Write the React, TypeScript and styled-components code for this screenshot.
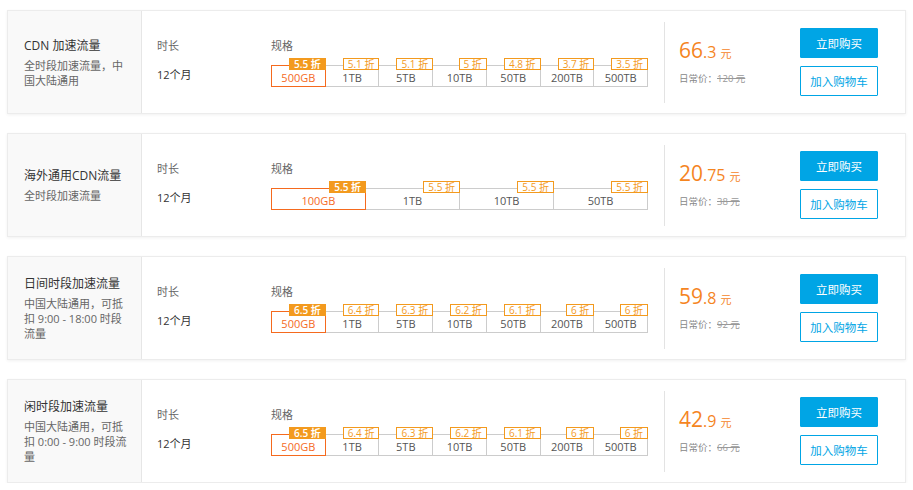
import React from "react";
import styled, { createGlobalStyle } from "styled-components";

const GlobalStyle = createGlobalStyle`
  body {
    margin: 0;
    background: #fff;
    font-family: "Open Sans", "Noto Sans CJK SC", sans-serif;
    color: #333;
  }
`;

const Page = styled.div`
  padding: 10px 7px 0 7px;
  width: 899px;
  display: flex;
  flex-direction: column;
  gap: 19px;
`;

const Card = styled.div`
  height: 104px;
  box-sizing: border-box;
  border: 1px solid #ececec;
  box-shadow: 0 1px 3px rgba(0, 0, 0, 0.06);
  display: flex;
  align-items: stretch;
  background: #fff;
`;

const Intro = styled.div`
  width: 134px;
  box-sizing: border-box;
  padding: 0 10px 0 16px;
  background: #f9f9f9;
  border-right: 1px solid #e6e6e6;
  display: flex;
  flex-direction: column;
  justify-content: center;
`;

const Title = styled.div`
  font-size: 12px;
  color: #333;
  line-height: 18px;
  margin-bottom: 3px;
  white-space: nowrap;
`;

const Desc = styled.div`
  font-size: 11px;
  color: #666;
  line-height: 15px;
  width: 103px;
`;

const Duration = styled.div`
  width: 114px;
  padding-left: 15px;
  padding-top: 26px;
  font-size: 11px;
`;

const Label = styled.div`
  color: #666;
  line-height: 18px;
  height: 18px;
`;

const Value = styled.div`
  margin-top: 11px;
  color: #333;
  line-height: 18px;
`;

const Spec = styled.div`
  width: 377px;
  padding-top: 26px;
  font-size: 11px;
`;

const Options = styled.div`
  margin-top: 10px;
  display: flex;
  height: 22px;
`;

const Option = styled.div<{ $active?: boolean }>`
  flex: 1;
  position: relative;
  box-sizing: border-box;
  border: 1px solid ${(p) => (p.$active ? "#f56a1e" : "#cccccc")};
  border-left-width: ${(p) => (p.$active ? "1px" : "0")};
  color: ${(p) => (p.$active ? "#f56a1e" : "#555")};
  display: flex;
  align-items: center;
  justify-content: center;
  &:first-child {
    border-left-width: 1px;
  }
`;

const Size = styled.span`
  font-size: 11px;
  line-height: 11px;
  margin-top: 3px;
`;

const Badge = styled.span<{ $active?: boolean }>`
  position: absolute;
  right: -1px;
  top: -8px;
  height: 12px;
  box-sizing: border-box;
  padding: 0 4px;
  font-size: 10px;
  line-height: 10px;
  border: 1px solid #f39a1e;
  background: ${(p) => (p.$active ? "#f39a1e" : "#fff")};
  color: ${(p) => (p.$active ? "#fff" : "#f39a1e")};
  font-weight: ${(p) => (p.$active ? 600 : 400)};
  white-space: nowrap;
`;

const PriceBox = styled.div`
  margin: 11px 0 10px 16px;
  border-left: 1px solid #e3e3e3;
  width: 121px;
  padding-left: 14px;
  display: flex;
  flex-direction: column;
  justify-content: center;
  padding-bottom: 4px;
`;

const Price = styled.div`
  color: #f5851f;
  line-height: 28px;
  white-space: nowrap;
`;

const Int = styled.span`
  font-size: 21px;
  font-weight: 500;
`;

const Dec = styled.span`
  font-size: 16px;
`;

const Unit = styled.span`
  font-size: 11px;
  margin-left: 4px;
`;

const Original = styled.div`
  margin-top: 4px;
  font-size: 9.5px;
  color: #888;
  line-height: 14px;
  s {
    color: #999;
  }
`;

const Actions = styled.div`
  display: flex;
  flex-direction: column;
  justify-content: center;
  gap: 8px;
`;

const Button = styled.button<{ $primary?: boolean }>`
  width: 78px;
  height: 30px;
  box-sizing: border-box;
  border: 1px solid #00a5e5;
  border-radius: 1px;
  background: ${(p) => (p.$primary ? "#00a5e5" : "#fff")};
  color: ${(p) => (p.$primary ? "#fff" : "#00a5e5")};
  font-family: inherit;
  font-size: 11.5px;
  padding: 0;
  cursor: pointer;
`;

type Item = { size: string; off: string };

type Product = {
  title: string;
  desc: string;
  items: Item[];
  int: string;
  dec: string;
  original: string;
};

const products: Product[] = [
  {
    title: "CDN 加速流量",
    desc: "全时段加速流量，中国大陆通用",
    items: [
      { size: "500GB", off: "5.5 折" },
      { size: "1TB", off: "5.1 折" },
      { size: "5TB", off: "5.1 折" },
      { size: "10TB", off: "5 折" },
      { size: "50TB", off: "4.8 折" },
      { size: "200TB", off: "3.7 折" },
      { size: "500TB", off: "3.5 折" },
    ],
    int: "66",
    dec: ".3",
    original: "120 元",
  },
  {
    title: "海外通用CDN流量",
    desc: "全时段加速流量",
    items: [
      { size: "100GB", off: "5.5 折" },
      { size: "1TB", off: "5.5 折" },
      { size: "10TB", off: "5.5 折" },
      { size: "50TB", off: "5.5 折" },
    ],
    int: "20",
    dec: ".75",
    original: "38 元",
  },
  {
    title: "日间时段加速流量",
    desc: "中国大陆通用，可抵扣 9:00 - 18:00 时段流量",
    items: [
      { size: "500GB", off: "6.5 折" },
      { size: "1TB", off: "6.4 折" },
      { size: "5TB", off: "6.3 折" },
      { size: "10TB", off: "6.2 折" },
      { size: "50TB", off: "6.1 折" },
      { size: "200TB", off: "6 折" },
      { size: "500TB", off: "6 折" },
    ],
    int: "59",
    dec: ".8",
    original: "92 元",
  },
  {
    title: "闲时段加速流量",
    desc: "中国大陆通用，可抵扣 0:00 - 9:00 时段流量",
    items: [
      { size: "500GB", off: "6.5 折" },
      { size: "1TB", off: "6.4 折" },
      { size: "5TB", off: "6.3 折" },
      { size: "10TB", off: "6.2 折" },
      { size: "50TB", off: "6.1 折" },
      { size: "200TB", off: "6 折" },
      { size: "500TB", off: "6 折" },
    ],
    int: "42",
    dec: ".9",
    original: "66 元",
  },
];

const ProductCard = ({ p }: { p: Product }) => (
  <Card>
    <Intro>
      <Title>{p.title}</Title>
      <Desc>{p.desc}</Desc>
    </Intro>
    <Duration>
      <Label>时长</Label>
      <Value>12个月</Value>
    </Duration>
    <Spec>
      <Label>规格</Label>
      <Options>
        {p.items.map((it, i) => (
          <Option key={it.size} $active={i === 0}>
            <Size>{it.size}</Size>
            <Badge $active={i === 0}>{it.off}</Badge>
          </Option>
        ))}
      </Options>
    </Spec>
    <PriceBox>
      <Price>
        <Int>{p.int}</Int>
        <Dec>{p.dec}</Dec>
        <Unit>元</Unit>
      </Price>
      <Original>
        日常价：<s>{p.original}</s>
      </Original>
    </PriceBox>
    <Actions>
      <Button $primary>立即购买</Button>
      <Button>加入购物车</Button>
    </Actions>
  </Card>
);

export default function App() {
  return (
    <>
      <GlobalStyle />
      <Page>
        {products.map((p) => (
          <ProductCard key={p.title} p={p} />
        ))}
      </Page>
    </>
  );
}
